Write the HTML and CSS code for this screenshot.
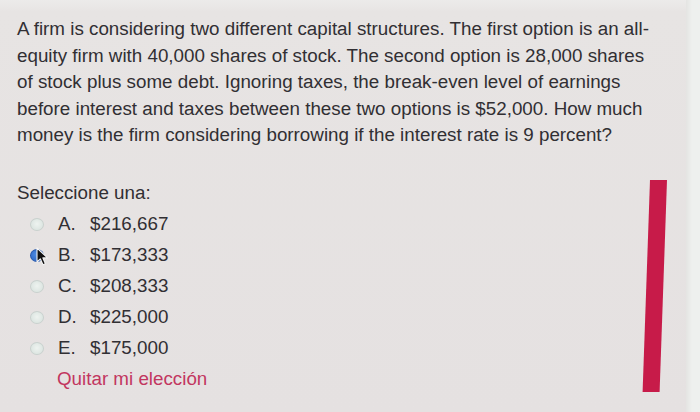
FILE: index.html
```html
<!DOCTYPE html>
<html>
<head>
<meta charset="utf-8">
<link rel="stylesheet" href="styles.css">
</head>
<body>
<div class="screen">
  <div class="page">
    <p class="question">A firm is considering two different capital structures. The first option is an all-<br>equity firm with 40,000 shares of stock. The second option is 28,000 shares<br>of stock plus some debt. Ignoring taxes, the break-even level of earnings<br>before interest and taxes between these two options is $52,000. How much<br>money is the firm considering borrowing if the interest rate is 9 percent?</p>
    <div class="answer-area">
      <div class="answers">
        <div class="prompt">Seleccione una:</div>
        <div class="option"><span class="radio"></span><span class="letter">A.</span><span class="amount">$216,667</span></div>
        <div class="option"><span class="radio checked"><svg class="cursor" viewBox="0 0 13 19" width="13" height="19"><path d="M1 1 L1 15 L4.3 11.8 L7 17.8 L9.4 16.7 L6.8 10.9 L11.5 10.9 Z" fill="#111" stroke="#f4f4f4" stroke-width="1.1" stroke-linejoin="round"/></svg></span><span class="letter">B.</span><span class="amount">$173,333</span></div>
        <div class="option"><span class="radio"></span><span class="letter">C.</span><span class="amount">$208,333</span></div>
        <div class="option"><span class="radio"></span><span class="letter">D.</span><span class="amount">$225,000</span></div>
        <div class="option"><span class="radio"></span><span class="letter">E.</span><span class="amount">$175,000</span></div>
        <div class="clear">Quitar mi elección</div>
      </div>
      <div class="bar"></div>
    </div>
  </div>
  <div class="edge"></div>
</div>
</body>
</html>
```
FILE: styles.css
```css
html, body {
  margin: 0;
  padding: 0;
}
body {
  width: 700px;
  height: 412px;
  overflow: hidden;
  background: #e6e2e2;
  font-family: "Liberation Sans", Arial, sans-serif;
  color: #312f33;
}
.screen {
  display: flex;
  height: 412px;
  background: linear-gradient(180deg, #ecebea 0px, #e7e4e3 12px, #e5e1e1 100%);
}
.page {
  flex: 1;
  padding: 16px 0 0 17px;
}
.edge {
  width: 14px;
  background: linear-gradient(90deg, #e4e4e2, #eef0ee 6px);
}
.question {
  margin: 0;
  font-size: 18.8px;
  line-height: 26.5px;
  white-space: nowrap;
}
.answer-area {
  display: flex;
  margin-top: 31px;
}
.answers {
  flex: 1;
}
.prompt {
  font-size: 18.8px;
  line-height: 26px;
  margin-bottom: 3px;
}
.option {
  display: flex;
  align-items: center;
  height: 31px;
  font-size: 18.8px;
}
.radio {
  position: relative;
  width: 12px;
  height: 11px;
  border-radius: 50%;
  background: radial-gradient(circle at 50% 45%, #eef3f0 0%, #dce5e1 75%);
  border: 1px solid #c9d1ce;
  margin-left: 13px;
  margin-right: 14px;
}
.radio.checked {
  background: radial-gradient(circle at 40% 40%, #4d8ae0 0%, #2b66c6 80%);
  border-color: #2857a8;
}
.cursor {
  position: absolute;
  left: 5px;
  top: -3px;
}
.letter {
  width: 32px;
}
.clear {
  margin-top: 4px;
  margin-left: 40px;
  font-size: 18.8px;
  color: #c2365f;
}
.bar {
  width: 17px;
  height: 212px;
  margin-top: 0;
  margin-right: 19px;
  background: #c71b49;
  transform: skewX(-2deg);
  transform-origin: top;
}
```
